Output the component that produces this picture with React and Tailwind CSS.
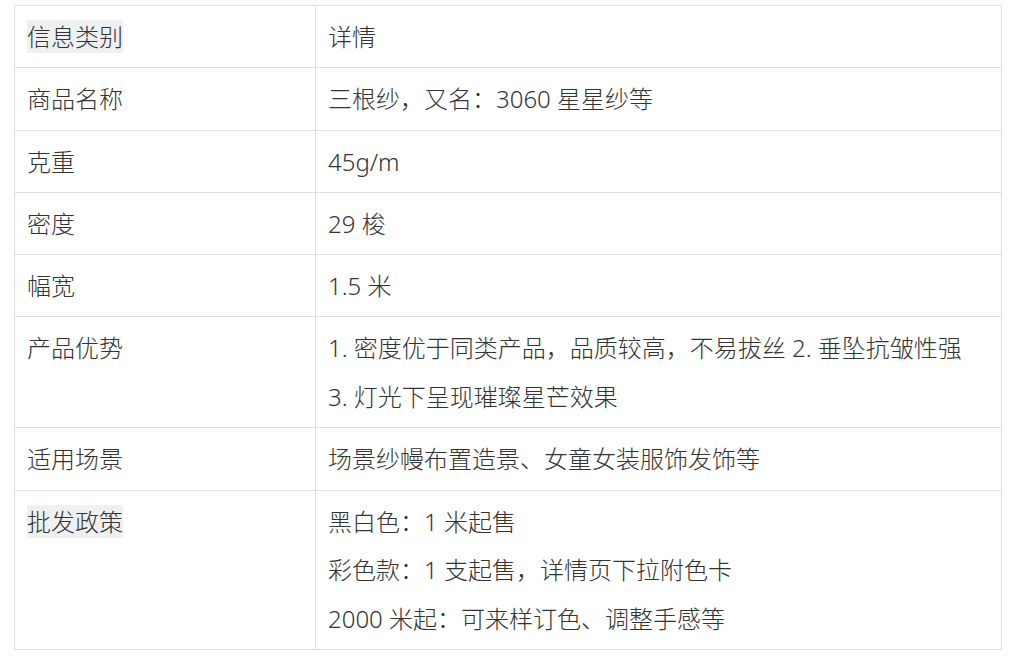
const rows = [
  { k: '商品名称', v: ['三根纱，又名：3060 星星纱等'] },
  { k: '克重', v: ['45g/m'] },
  { k: '密度', v: ['29 梭'] },
  { k: '幅宽', v: ['1.5 米'] },
  { k: '产品优势', v: ['1. 密度优于同类产品，品质较高，不易拔丝 2. 垂坠抗皱性强', '3. 灯光下呈现璀璨星芒效果'] },
  { k: '适用场景', v: ['场景纱幔布置造景、女童女装服饰发饰等'] },
  { k: '批发政策', v: ['黑白色：1 米起售', '彩色款：1 支起售，详情页下拉附色卡', '2000 米起：可来样订色、调整手感等'], mark: true },
];

const cell = 'border border-[#dfdfdf] px-[12px] pt-[7px] pb-[5.8px] align-top';

export default function App() {
  return (
    <div
      className="min-h-screen bg-white pt-[5px] pl-[14px] text-[#333] text-[24px] leading-[48.5px] font-light"
      style={{ fontFamily: '"Noto Sans", "Noto Sans CJK SC", sans-serif' }}
    >
      <table className="w-[988px] border-collapse table-fixed">
        <colgroup>
          <col className="w-[301px]" />
          <col />
        </colgroup>
        <tbody>
          <tr>
            <td className={cell}>
              <span className="bg-[#eff0f2]">信息类别</span>
            </td>
            <td className={cell}>详情</td>
          </tr>
          {rows.map((r) => (
            <tr key={r.k}>
              <td className={cell}>
                {r.mark ? <span className="bg-[#eff0f2]">{r.k}</span> : r.k}
              </td>
              <td className={cell}>
                {r.v.map((line, i) => (
                  <div key={i} className="whitespace-nowrap">{line}</div>
                ))}
              </td>
            </tr>
          ))}
        </tbody>
      </table>
    </div>
  );
}
